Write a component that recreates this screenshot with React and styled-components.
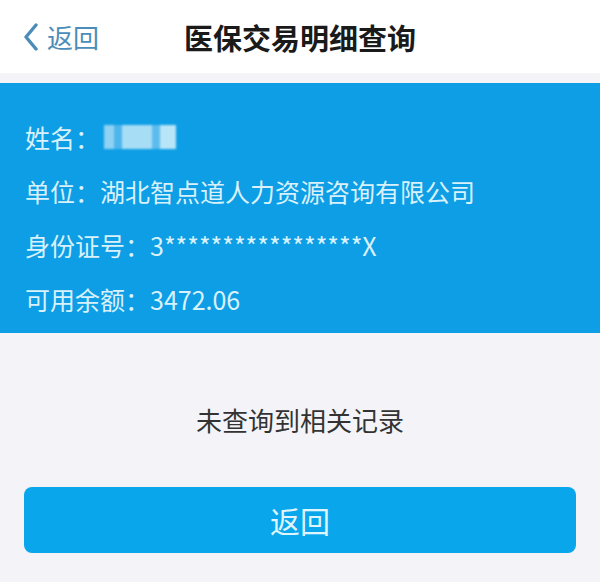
import React from "react";
import styled, { createGlobalStyle } from "styled-components";

const GlobalStyle = createGlobalStyle`
  html, body {
    margin: 0;
    padding: 0;
    background: #f4f4f8;
    font-family: "Noto Sans CJK SC", "Noto Sans", "Liberation Sans", sans-serif;
  }
`;

const Page = styled.div`
  width: 600px;
  height: 582px;
  background: #f4f4f8;
  display: flex;
  flex-direction: column;
  overflow: hidden;
`;

const NavBar = styled.header`
  height: 73px;
  background: #ffffff;
  display: flex;
  align-items: center;
  position: relative;
`;

const BackLink = styled.a`
  display: flex;
  align-items: center;
  gap: 8px;
  padding-left: 23px;
  color: #4b8db8;
  font-size: 26px;
  text-decoration: none;
  z-index: 1;
`;

const Title = styled.h1`
  position: absolute;
  left: 0;
  right: 0;
  margin: 0;
  text-align: center;
  font-size: 29px;
  font-weight: 700;
  color: #1a1a1a;
`;

const Divider = styled.div`
  height: 10px;
  background: #f4f4f8;
`;

const InfoPanel = styled.section`
  background: #0d9ee5;
  padding: 27px 0 7px 25px;
  display: flex;
  flex-direction: column;
`;

const InfoRow = styled.div`
  height: 54px;
  display: flex;
  align-items: center;
  font-size: 25px;
  color: #d8f1fb;
`;

const Label = styled.span`
  white-space: nowrap;
`;

const Blurred = styled.span`
  display: inline-flex;
  height: 24px;
  margin-left: 4px;
  filter: blur(1.2px);
`;

const BlurBlock = styled.span`
  width: ${(p) => p.w}px;
  height: 24px;
  background: ${(p) => p.c};
`;

const Empty = styled.div`
  height: 154px;
  box-sizing: border-box;
  padding-top: 18px;
  display: flex;
  align-items: center;
  justify-content: center;
  font-size: 26px;
  color: #333333;
`;

const ButtonWrap = styled.div`
  padding: 0 24px;
`;

const BigButton = styled.button`
  width: 100%;
  height: 66px;
  border: none;
  border-radius: 8px;
  background: #0aa6eb;
  color: #def5fd;
  font-family: inherit;
  font-size: 30px;
  display: flex;
  align-items: center;
  justify-content: center;
`;

const Chevron = () => (
  <svg width="16" height="28" viewBox="0 0 16 28">
    <path d="M13 2 L3 14 L13 26" fill="none" stroke="#4b8db8" strokeWidth="3.4" strokeLinecap="round" strokeLinejoin="round" />
  </svg>
);

export default function App() {
  return (
    <Page>
      <GlobalStyle />
      <NavBar>
        <BackLink>
          <Chevron />
          返回
        </BackLink>
        <Title>医保交易明细查询</Title>
      </NavBar>
      <Divider />
      <InfoPanel>
        <InfoRow>
          <Label>姓名：</Label>
          <Blurred>
            <BlurBlock w={10} c="#8fd2f3" />
            <BlurBlock w={8} c="#4fb6ec" />
            <BlurBlock w={30} c="#a8ddf6" />
            <BlurBlock w={8} c="#5cbcee" />
            <BlurBlock w={16} c="#b8e5f8" />
          </Blurred>
        </InfoRow>
        <InfoRow>
          <Label>单位：湖北智点道人力资源咨询有限公司</Label>
        </InfoRow>
        <InfoRow>
          <Label>身份证号：3*****************X</Label>
        </InfoRow>
        <InfoRow>
          <Label>可用余额：3472.06</Label>
        </InfoRow>
      </InfoPanel>
      <Empty>未查询到相关记录</Empty>
      <ButtonWrap>
        <BigButton>返回</BigButton>
      </ButtonWrap>
    </Page>
  );
}
